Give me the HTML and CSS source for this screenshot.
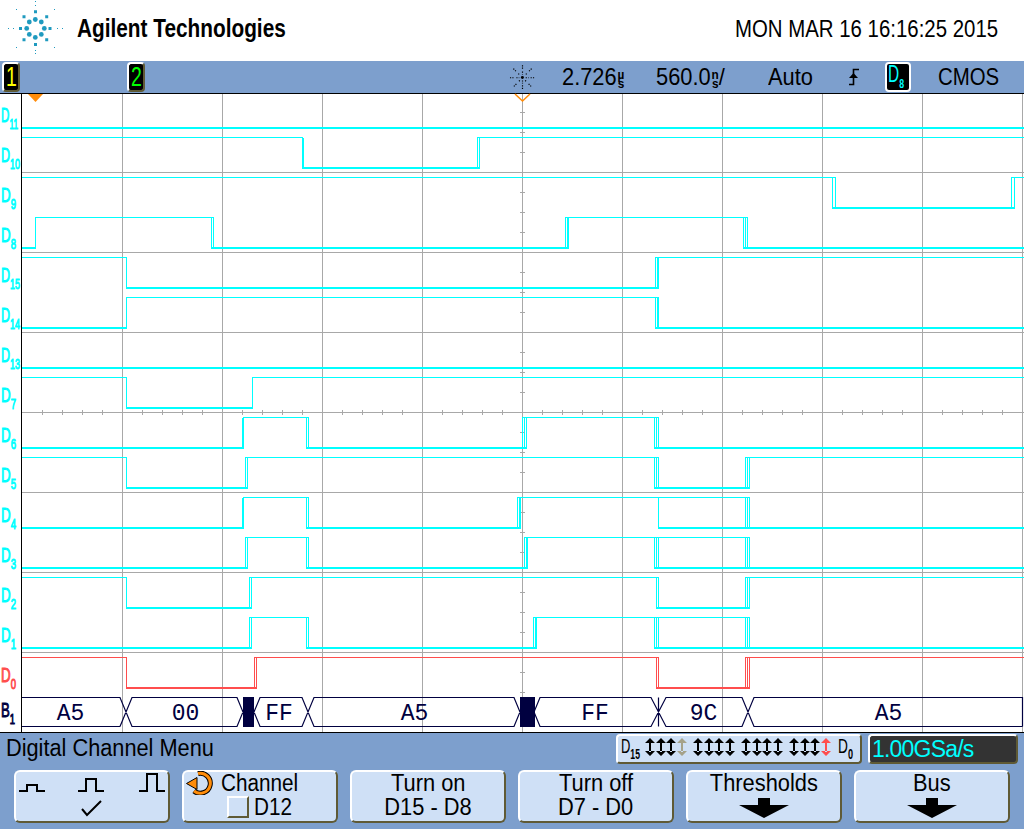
FILE: index.html
```html
<!DOCTYPE html>
<html>
<head>
    <title>Digital Channel Menu</title>
    <meta charset="UTF-8">
    <meta name="viewport" content="width=device-width, initial-scale=1.0">
    <link rel="stylesheet" href="styles.css">
</head>
<body>
    <svg class="defs" width="0" height="0">
        <symbol id="pin" viewBox="0 0 10 18">
            <path d="M4 4H6V14H4Z M0 5L5 0L10 5Z M0 13L5 18L10 13Z"/>
        </symbol>
        <symbol id="down" viewBox="0 0 50 20">
            <path d="M19 0H31V7H50L25 20L0 7H19Z"/>
        </symbol>
        <symbol id="spark" viewBox="0 0 64 54">
            <circle cx="35.3" cy="19.5" r="2.4"/><circle cx="29.3" cy="22" r="2.4"/><circle cx="41.3" cy="22" r="2.4"/>
            <circle cx="26.7" cy="28.4" r="2.4"/><circle cx="44.3" cy="28.4" r="2.4"/><circle cx="29.3" cy="34.4" r="2.4"/>
            <circle cx="41.3" cy="34.4" r="2.4"/><circle cx="35.3" cy="37.4" r="2.4"/>
            <path d="M34 10.2h3v3h-3z M22.5 15.2h3v3h-3z M45.2 15.2h3v3h-3z M19 27h3v3h-3z M48.5 27h3v3h-3z M22.5 38.2h3v3h-3z M45.2 38.2h3v3h-3z M34 43h3v3h-3z"/>
            <path d="M35 1h1v1h-1z M35 5h1v1h-1z M35 50h1v1h-1z M35 53h1v1h-1z M8 28h1v1h-1z M13 28h1v1h-1z M57 28h1v1h-1z M62 28h1v1h-1z M16 9h1v1h-1z M54 9h1v1h-1z M16 47h1v1h-1z M54 47h1v1h-1z"/>
        </symbol>
    </svg>

    <header class="top">
        <svg class="logo" width="64" height="54"><use href="#spark" width="64" height="54"/></svg>
        <div class="brand">Agilent Technologies</div>
        <div class="clock">MON MAR 16 16:16:25 2015</div>
    </header>

    <div class="status">
        <span class="chan chan-1"><b>1</b></span>
        <span class="chan chan-2"><b>2</b></span>
        <svg class="run-icon" width="27" height="27" viewBox="8 1 55 54">
            <circle cx="35.3" cy="28" r="3"/>
            <path class="run-rays" d="M35.5 3V12 M35.5 16V22 M35.5 34V40 M35.5 44V53 M10 28.5H19 M23 28.5H29 M42 28.5H48 M52 28.5H61 M17 10L23 16 M27 20L30 23 M41 34L44 37 M48 41L54 47 M54 10L48 16 M44 20L41 23 M30 34L27 37 M23 41L17 47"/>
        </svg>
        <span class="stat stat-delay">2.726<span class="unit"><i>µ</i><i>s</i></span></span>
        <span class="stat stat-scale">560.0<span class="unit"><i>n</i><i>s</i></span>/</span>
        <span class="stat stat-mode">Auto</span>
        <svg class="edge" width="12" height="18" viewBox="0 0 12 18"><path class="edge-line" d="M1 16.5H5.5V1.5H11"/><path d="M1 10L5.5 5L10 10Z"/></svg>
        <span class="source"><svg class="tiny-label" width="22" height="26"><text x="1" y="18" textLength="16" lengthAdjust="spacingAndGlyphs">D<tspan class="tiny-sub" dy="6">8</tspan></text></svg></span>
        <span class="stat stat-std">CMOS</span>
    </div>

    <svg class="plot" width="1024" height="640" viewBox="0 93 1024 640">
        <path class="grid" d="M122.5 94V732 M222.5 94V732 M322.5 94V732 M422.5 94V732 M522.5 94V732 M622.5 94V732 M722.5 94V732 M822.5 94V732 M922.5 94V732 M1022.5 94V732
            M22 172.5H1024 M22 252.5H1024 M22 332.5H1024 M22 412.5H1024 M22 492.5H1024 M22 572.5H1024 M22 652.5H1024"/>
        <path class="grid" d="M520 112.5h5 M520 132.5h5 M520 152.5h5 M520 192.5h5 M520 212.5h5 M520 232.5h5 M520 272.5h5 M520 292.5h5 M520 312.5h5 M520 352.5h5 M520 372.5h5 M520 392.5h5 M520 432.5h5 M520 452.5h5 M520 472.5h5 M520 512.5h5 M520 532.5h5 M520 552.5h5 M520 592.5h5 M520 612.5h5 M520 632.5h5 M520 672.5h5 M520 692.5h5 M520 712.5h5
            M42.5 410v5 M62.5 410v5 M82.5 410v5 M102.5 410v5 M142.5 410v5 M162.5 410v5 M182.5 410v5 M202.5 410v5 M242.5 410v5 M262.5 410v5 M282.5 410v5 M302.5 410v5 M342.5 410v5 M362.5 410v5 M382.5 410v5 M402.5 410v5 M442.5 410v5 M462.5 410v5 M482.5 410v5 M502.5 410v5 M542.5 410v5 M562.5 410v5 M582.5 410v5 M602.5 410v5 M642.5 410v5 M662.5 410v5 M682.5 410v5 M702.5 410v5 M742.5 410v5 M762.5 410v5 M782.5 410v5 M802.5 410v5 M842.5 410v5 M862.5 410v5 M882.5 410v5 M902.5 410v5 M942.5 410v5 M962.5 410v5 M982.5 410v5 M1002.5 410v5"/>
        <path class="frame" d="M0 93.5H1024 M0 732.5H1024 M21.5 94V732"/>

        <path class="marker" d="M28 94H43L35.5 102Z"/>
        <path class="marker-open" d="M515 94L522.5 101L530 94"/>

        <!-- D11 -->
        <path class="lo" d="M22 128H1024"/>
        <!-- D10 -->
        <path class="hi" d="M22 137.5H303 M302.5 137.5V168 M303.5 137.5V168 M477.5 137.5V168 M479.5 137.5V168 M477 137.5H1024"/>
        <path class="lo" d="M302 168H480"/>
        <!-- D9 -->
        <path class="hi" d="M22 177.5H836 M832.5 177.5V208 M835.5 177.5V208 M1011.5 177.5V208 M1014.5 177.5V208 M1011 177.5H1024"/>
        <path class="lo" d="M832 208H1015"/>
        <!-- D8 -->
        <path class="hi" d="M35.5 217.5V248 M35 217.5H214 M211.5 217.5V248 M213.5 217.5V248 M565.5 217.5V248 M567.5 217.5V248 M568.5 217.5V248 M565 217.5H748 M743.5 217.5V248 M745.5 217.5V248 M747.5 217.5V248"/>
        <path class="lo" d="M22 248H36 M211 248H569 M743 248H1024"/>
        <!-- D15 -->
        <path class="hi" d="M22 257.5H127 M126.5 257.5V288 M655.5 257.5V288 M657.5 257.5V288 M658.5 257.5V288 M655 257.5H1024"/>
        <path class="lo" d="M126 288H659"/>
        <!-- D14 -->
        <path class="hi" d="M126.5 297.5V328 M126 297.5H659 M655.5 297.5V328 M657.5 297.5V328 M658.5 297.5V328"/>
        <path class="lo" d="M22 328H127 M655 328H1024"/>
        <!-- D13 -->
        <path class="lo" d="M22 368H1024"/>
        <!-- D7 -->
        <path class="hi" d="M22 377.5H127 M126.5 377.5V408 M252.5 377.5V408 M252 377.5H1024"/>
        <path class="lo" d="M126 408H253"/>
        <!-- D6 -->
        <path class="hi" d="M243.5 417.5V448 M242.5 417.5V448 M243 417.5H309 M306.5 417.5V448 M308.5 417.5V448 M522.5 417.5V448 M524.5 417.5V448 M526.5 417.5V448 M522 417.5H659 M654.5 417.5V448 M656.5 417.5V448 M658.5 417.5V448"/>
        <path class="lo" d="M22 448H244 M306 448H527 M654 448H1024"/>
        <!-- D5 -->
        <path class="hi" d="M22 457.5H127 M126.5 457.5V488 M245.5 457.5V488 M247.5 457.5V488 M245 457.5H659 M654.5 457.5V488 M656.5 457.5V488 M658.5 457.5V488 M745.5 457.5V488 M747.5 457.5V488 M749.5 457.5V488 M745 457.5H1024"/>
        <path class="lo" d="M126 488H248 M654 488H750"/>
        <!-- D4 -->
        <path class="hi" d="M243.5 497.5V528 M242.5 497.5V528 M243 497.5H309 M306.5 497.5V528 M308.5 497.5V528 M517.5 497.5V528 M519.5 497.5V528 M520.5 497.5V528 M517 497.5H750 M658.5 497.5V528 M745.5 497.5V528 M747.5 497.5V528 M749.5 497.5V528"/>
        <path class="lo" d="M22 528H244 M306 528H521 M658 528H1024"/>
        <!-- D3 -->
        <path class="hi" d="M245.5 537.5V568 M247.5 537.5V568 M245 537.5H309 M306.5 537.5V568 M308.5 537.5V568 M524.5 537.5V568 M526.5 537.5V568 M527.5 537.5V568 M524 537.5H750 M654.5 537.5V568 M656.5 537.5V568 M658.5 537.5V568 M745.5 537.5V568 M747.5 537.5V568 M749.5 537.5V568"/>
        <path class="lo" d="M22 568H248 M306 568H528 M654 568H1024"/>
        <!-- D2 -->
        <path class="hi" d="M22 577.5H127 M126.5 577.5V608 M249.5 577.5V608 M251.5 577.5V608 M249 577.5H659 M656.5 577.5V608 M658.5 577.5V608 M745.5 577.5V608 M747.5 577.5V608 M749.5 577.5V608 M745 577.5H1024"/>
        <path class="lo" d="M126 608H252 M656 608H750"/>
        <!-- D1 -->
        <path class="hi" d="M249.5 617.5V648 M251.5 617.5V648 M249 617.5H309 M306.5 617.5V648 M308.5 617.5V648 M533.5 617.5V648 M535.5 617.5V648 M536.5 617.5V648 M533 617.5H750 M654.5 617.5V648 M656.5 617.5V648 M658.5 617.5V648 M745.5 617.5V648 M747.5 617.5V648 M749.5 617.5V648"/>
        <path class="lo" d="M22 648H252 M306 648H537 M654 648H1024"/>
        <!-- D0 -->
        <path class="hi red" d="M22 657.5H127 M126.5 657.5V688 M254.5 657.5V688 M256.5 657.5V688 M254 657.5H659 M656.5 657.5V688 M658.5 657.5V688 M745.5 657.5V688 M747.5 657.5V688 M749.5 657.5V688 M745 657.5H1024"/>
        <path class="lo red" d="M126 688H257 M656 688H750"/>

        <!-- bus -->
        <path class="bus" d="M22 697.5H120L132 726.5H237L249 697.5 M120 726.5L132 697.5H237L249 726.5 M22 726.5H120
            M248 697.5L260 726.5H302L314 697.5H514L526 726.5 M248 726.5L260 697.5H302L314 726.5H514L526 697.5
            M528 697.5L540 726.5H651L666 697.5H742L754 726.5H1022.5 M528 726.5L540 697.5H651L666 726.5H742L754 697.5H1022.5V726.5 M658.5 697.5V726.5"/>
        <rect class="bus-fill" x="243" y="697" width="11" height="30"/>
        <rect class="bus-fill" x="520" y="697" width="15" height="30"/>
        <text class="bus-text" x="70.5" y="720">A5</text>
        <text class="bus-text" x="185.5" y="720">00</text>
        <text class="bus-text" x="279" y="720">FF</text>
        <text class="bus-text" x="414.5" y="720">A5</text>
        <text class="bus-text" x="595" y="720">FF</text>
        <text class="bus-text" x="703.5" y="720">9C</text>
        <text class="bus-text" x="888.5" y="720">A5</text>

        <!-- channel labels -->
        <g class="labels">
            <text x="1" y="122" textLength="17" lengthAdjust="spacingAndGlyphs">D<tspan class="sub" dy="7">11</tspan></text>
            <text x="1" y="162" textLength="19" lengthAdjust="spacingAndGlyphs">D<tspan class="sub" dy="7">10</tspan></text>
            <text x="1" y="202" textLength="15" lengthAdjust="spacingAndGlyphs">D<tspan class="sub" dy="7">9</tspan></text>
            <text x="1" y="242" textLength="15" lengthAdjust="spacingAndGlyphs">D<tspan class="sub" dy="7">8</tspan></text>
            <text x="1" y="282" textLength="19" lengthAdjust="spacingAndGlyphs">D<tspan class="sub" dy="7">15</tspan></text>
            <text x="1" y="322" textLength="19" lengthAdjust="spacingAndGlyphs">D<tspan class="sub" dy="7">14</tspan></text>
            <text x="1" y="362" textLength="19" lengthAdjust="spacingAndGlyphs">D<tspan class="sub" dy="7">13</tspan></text>
            <text x="1" y="402" textLength="15" lengthAdjust="spacingAndGlyphs">D<tspan class="sub" dy="7">7</tspan></text>
            <text x="1" y="442" textLength="15" lengthAdjust="spacingAndGlyphs">D<tspan class="sub" dy="7">6</tspan></text>
            <text x="1" y="482" textLength="15" lengthAdjust="spacingAndGlyphs">D<tspan class="sub" dy="7">5</tspan></text>
            <text x="1" y="522" textLength="15" lengthAdjust="spacingAndGlyphs">D<tspan class="sub" dy="7">4</tspan></text>
            <text x="1" y="562" textLength="15" lengthAdjust="spacingAndGlyphs">D<tspan class="sub" dy="7">3</tspan></text>
            <text x="1" y="602" textLength="15" lengthAdjust="spacingAndGlyphs">D<tspan class="sub" dy="7">2</tspan></text>
            <text x="1" y="642" textLength="15" lengthAdjust="spacingAndGlyphs">D<tspan class="sub" dy="7">1</tspan></text>
            <text class="red" x="1" y="682" textLength="15" lengthAdjust="spacingAndGlyphs">D<tspan class="sub" dy="7">0</tspan></text>
            <text class="navy" x="1" y="717" textLength="14" lengthAdjust="spacingAndGlyphs">B<tspan class="sub" dy="7">1</tspan></text>
        </g>
    </svg>

    <section class="menu">
        <div class="menu-head">
            <div class="menu-title">Digital Channel Menu</div>
            <div class="pins">
                <svg class="pin-label" width="24" height="26"><text x="0" y="17" textLength="19" lengthAdjust="spacingAndGlyphs">D<tspan class="pin-sub" dy="6">15</tspan></text></svg>
                <div class="pin-group">
                    <svg class="pin-arrow"><use href="#pin"/></svg>
                    <svg class="pin-arrow"><use href="#pin"/></svg>
                    <svg class="pin-arrow"><use href="#pin"/></svg>
                    <svg class="pin-arrow pin-off"><use href="#pin"/></svg>
                </div>
                <div class="pin-group">
                    <svg class="pin-arrow"><use href="#pin"/></svg>
                    <svg class="pin-arrow"><use href="#pin"/></svg>
                    <svg class="pin-arrow"><use href="#pin"/></svg>
                    <svg class="pin-arrow"><use href="#pin"/></svg>
                </div>
                <div class="pin-group">
                    <svg class="pin-arrow"><use href="#pin"/></svg>
                    <svg class="pin-arrow"><use href="#pin"/></svg>
                    <svg class="pin-arrow"><use href="#pin"/></svg>
                    <svg class="pin-arrow"><use href="#pin"/></svg>
                </div>
                <div class="pin-group">
                    <svg class="pin-arrow"><use href="#pin"/></svg>
                    <svg class="pin-arrow"><use href="#pin"/></svg>
                    <svg class="pin-arrow"><use href="#pin"/></svg>
                    <svg class="pin-arrow pin-red"><use href="#pin"/></svg>
                </div>
                <svg class="pin-label" width="18" height="26"><text x="1" y="17" textLength="15" lengthAdjust="spacingAndGlyphs">D<tspan class="pin-sub" dy="6">0</tspan></text></svg>
            </div>
            <div class="rate">1.00GSa/s</div>
        </div>
        <div class="keys">
            <div class="key key-pulse">
                <svg width="152" height="49" viewBox="0 0 152 49">
                    <path class="pulse" d="M3 19H11V13H21V19H29 M62 19H70V7H80V19H88 M123 19H131V2H141V19H149"/>
                    <path class="pulse" d="M66 37L71 43L85 29"/>
                </svg>
            </div>
            <div class="key key-channel">
                <div class="channel-top">
                    <svg width="29" height="24" viewBox="0 0 29 24">
                        <path class="turn-edge" d="M12 2.5A10 10 0 1 1 8 20"/>
                        <path class="turn-fill" d="M12 2.5A10 10 0 1 1 8 20"/>
                        <path class="turn-head" d="M.5 12.5L11 6.5V18.5Z"/>
                    </svg>
                    <span class="squeeze">Channel</span>
                </div>
                <div class="channel-bottom">
                    <span class="check"></span>
                    <span class="squeeze">D12</span>
                </div>
            </div>
            <div class="key"><span class="key-line">Turn on</span><span class="key-line">D15 - D8</span></div>
            <div class="key"><span class="key-line">Turn off</span><span class="key-line">D7 - D0</span></div>
            <div class="key"><span class="key-line">Thresholds</span><svg class="key-arrow" width="50" height="20"><use href="#down"/></svg></div>
            <div class="key"><span class="key-line">Bus</span><svg class="key-arrow" width="50" height="20"><use href="#down"/></svg></div>
        </div>
    </section>
</body>
</html>
```

FILE: styles.css
```css
* {
    box-sizing: border-box;
}
body {
    margin: 0;
    width: 1024px;
    height: 829px;
    overflow: hidden;
    background: #fff;
    font-family: "Liberation Sans", Arial, sans-serif;
    color: #000;
}
.defs {
    display: block;
    height: 0;
}

/* top white strip */
.top {
    height: 61px;
    display: flex;
    align-items: flex-start;
}
.logo {
    fill: #1f9abf;
    flex: none;
}
.brand {
    margin: 13px 0 0 13px;
    font-size: 26px;
    line-height: 30px;
    font-weight: bold;
    white-space: nowrap;
    width: 210px;
    transform: scaleX(.8);
    transform-origin: left;
}
.clock {
    margin: 14px 0 0 448px;
    font-size: 24px;
    line-height: 30px;
    white-space: nowrap;
    width: 263px;
    transform: scaleX(.85);
    transform-origin: left;
}

/* status bar */
.status {
    height: 32px;
    background: #7d9fcd;
    display: flex;
    align-items: center;
    padding-left: 2px;
}
.chan {
    width: 18px;
    height: 30px;
    background: #000;
    border-radius: 4px;
    border: 2px solid;
    border-color: #fff #5f5a35 #5f5a35 #fff;
    font-size: 27px;
    line-height: 26px;
    text-align: center;
    flex: none;
}
.chan b {
    display: inline-block;
    font-weight: normal;
    transform: scaleX(.72);
}
.chan-1 {
    color: #ffff00;
}
.chan-2 {
    color: #00ff00;
    margin-left: 107px;
}
.run-icon {
    fill: #000;
    margin-left: 364px;
    flex: none;
}
.run-rays {
    fill: none;
    stroke: #000;
    stroke-width: 2.4;
    stroke-dasharray: 2.4 2.4;
}
.stat {
    font-size: 24px;
    white-space: nowrap;
    flex: none;
    transform: scaleX(.91);
    transform-origin: left;
}
.stat-delay {
    margin-left: 26px;
    width: 94px;
}
.stat-scale {
    width: 112px;
}
.stat-mode {
    width: 80px;
}
.stat-std {
    margin-left: 27px;
    transform: scaleX(.85);
}
.unit {
    display: inline-flex;
    flex-direction: column;
    align-items: center;
    vertical-align: middle;
    margin-left: 1px;
    font-size: 13px;
    line-height: 9px;
}
.unit i {
    font-style: normal;
    font-weight: bold;
}
.edge {
    fill: #000;
    flex: none;
    margin-right: 25px;
}
.edge-line {
    fill: none;
    stroke: #000;
    stroke-width: 1.6;
}
.source {
    width: 26px;
    height: 30px;
    background: #000;
    border: 2px solid #fff;
    border-radius: 4px;
    flex: none;
}
.tiny-label {
    display: block;
    overflow: visible;
    fill: #00ffff;
    font-size: 23px;
}
.tiny-sub {
    font-size: 13px;
    font-weight: bold;
}

/* plot area */
.plot {
    display: block;
    background: #fff;
}
.grid {
    fill: none;
    stroke: #a8a8a8;
    stroke-width: 1;
    shape-rendering: crispEdges;
}
.frame {
    fill: none;
    stroke: #000;
    stroke-width: 1;
    shape-rendering: crispEdges;
}
.marker {
    fill: #ff8c0a;
}
.marker-open {
    fill: none;
    stroke: #ff8c0a;
    stroke-width: 1.5;
}
.hi {
    fill: none;
    stroke: #00ffff;
    stroke-width: 1;
    shape-rendering: crispEdges;
}
.lo {
    fill: none;
    stroke: #00ffff;
    stroke-width: 2;
    shape-rendering: crispEdges;
}
.hi.red, .lo.red {
    stroke: #ff4d4d;
}
.bus {
    fill: none;
    stroke: #000040;
    stroke-width: 1.2;
}
.bus-fill {
    fill: #000040;
}
.bus-text {
    font-family: "Liberation Mono", monospace;
    font-size: 23px;
    fill: #000040;
    text-anchor: middle;
}
.labels text {
    fill: #00ffff;
    stroke: #00ffff;
    stroke-width: 1;
    font-size: 21px;
}
.labels .sub {
    font-size: 15px;
}
.labels .red {
    fill: #ff4d4d;
    stroke: #ff4d4d;
}
.labels .navy {
    fill: #000040;
    stroke: #000040;
}

/* softkey menu */
.menu {
    height: 96px;
    background: #7d9fcd;
}
.menu-head {
    height: 37px;
    display: flex;
    align-items: flex-start;
}
.menu-title {
    margin: 2px 0 0 6px;
    width: 610px;
    font-size: 23px;
    line-height: 27px;
    white-space: nowrap;
    transform: scaleX(.945);
    transform-origin: left;
}
.pins {
    margin-top: 1px;
    width: 246px;
    height: 30px;
    display: flex;
    align-items: flex-start;
    background: #cfe0f6;
    border: 2px solid;
    border-color: #fff #5f5a35 #5f5a35 #fff;
    border-radius: 4px;
    padding: 2px 0 0 3px;
}
.pin-label {
    display: block;
    overflow: visible;
    margin-top: -2px;
    font-size: 21px;
    flex: none;
}
.pin-sub {
    font-size: 14px;
    font-weight: bold;
}
.pin-group {
    display: flex;
    gap: .7px;
    margin-right: 5.9px;
}
.pin-arrow {
    width: 10px;
    height: 18px;
    fill: #000;
    flex: none;
}
.pin-off {
    fill: #a5a28a;
}
.pin-red {
    fill: #ff4d4d;
}
.rate {
    margin: 1px 0 0 6px;
    width: 150px;
    height: 30px;
    background: #333;
    border: 2px solid;
    border-color: #fff #5f5a35 #5f5a35 #fff;
    border-radius: 4px;
    color: #00ffff;
    font-size: 23px;
    line-height: 26px;
    letter-spacing: -.8px;
    padding-left: 2px;
}
.keys {
    display: flex;
    gap: 12px;
    padding-left: 14px;
}
.key {
    width: 156px;
    height: 53px;
    background: #cfe0f6;
    border: 2px solid;
    border-color: #fff #5f5a35 #5f5a35 #fff;
    border-radius: 6px;
    display: flex;
    flex-direction: column;
    align-items: center;
    font-size: 23px;
    line-height: 24px;
    white-space: nowrap;
    flex: none;
}
.key-line {
    display: block;
    transform: scaleX(.95);
}
.key-line:first-child {
    margin-top: -1px;
}
.squeeze {
    display: block;
    transform: scaleX(.9);
    transform-origin: left;
}
.key-pulse svg {
    display: block;
}
.key-arrow {
    fill: #000;
    flex: none;
    margin-top: 3px;
}
.pulse {
    fill: none;
    stroke: #000;
    stroke-width: 2;
}
.key-channel {
    align-items: flex-start;
    padding-left: 2px;
}
.channel-top {
    display: flex;
    align-items: center;
    gap: 6px;
    margin-top: -1px;
}
.channel-bottom {
    display: flex;
    align-items: center;
    gap: 5px;
    margin-left: 41px;
}
.check {
    width: 22px;
    height: 22px;
    border: 2px solid;
    border-color: #fff #5f5a35 #5f5a35 #fff;
}
.turn-edge {
    fill: none;
    stroke: #000;
    stroke-width: 5;
}
.turn-fill {
    fill: none;
    stroke: #ff8c0a;
    stroke-width: 3;
}
.turn-head {
    fill: #ff8c0a;
    stroke: #000;
    stroke-width: 1;
}
```
